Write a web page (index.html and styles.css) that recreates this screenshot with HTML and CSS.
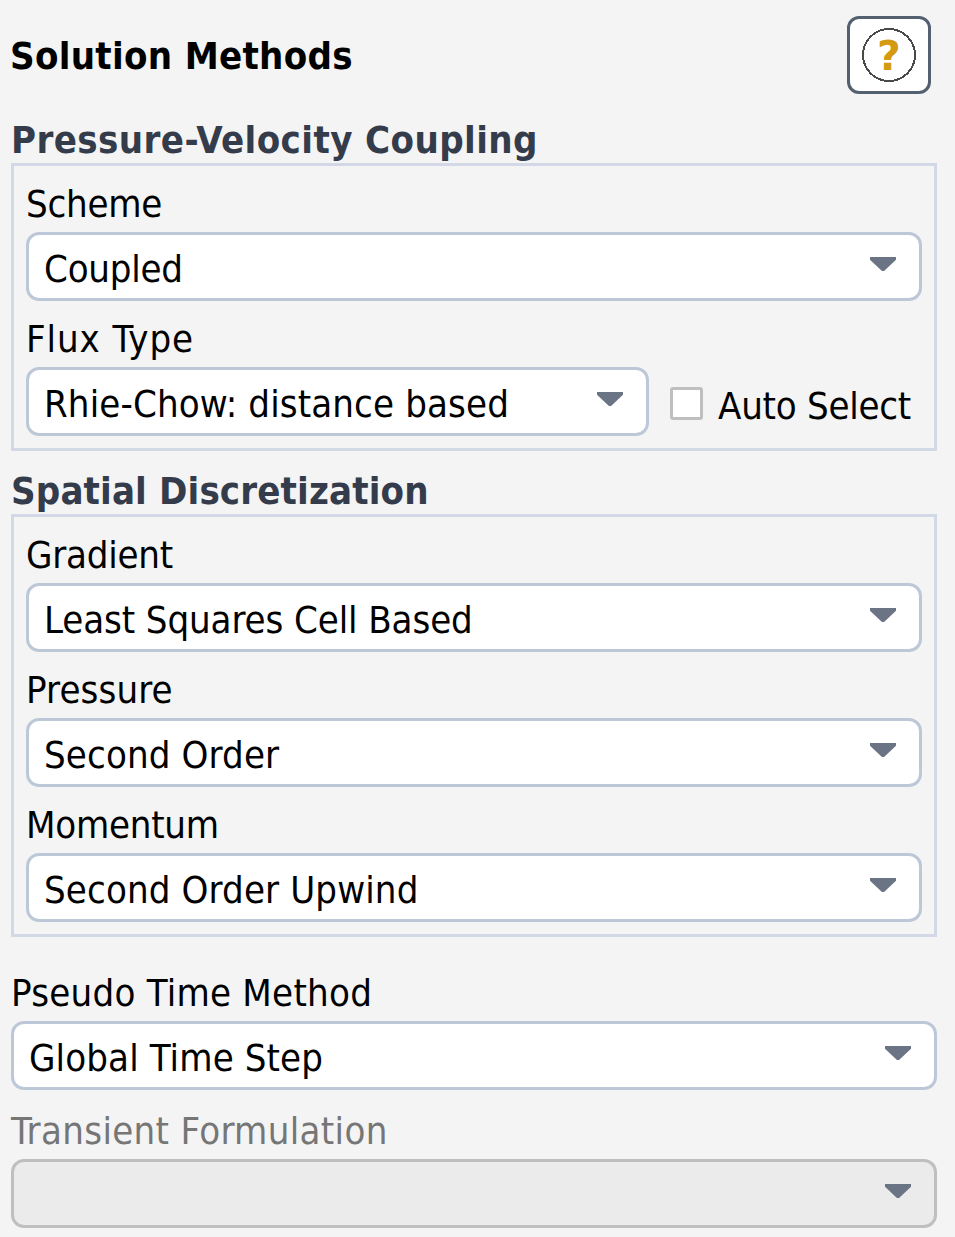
FILE: index.html
```html
<!DOCTYPE html>
<html lang="en">
<head>
<meta charset="utf-8">
<title>Solution Methods</title>
<link rel="stylesheet" href="styles.css">
</head>
<body>
<main class="panel">
  <header class="head">
    <h1 class="title">Solution Methods</h1>
    <button class="help" type="button" aria-label="Help">
      <svg width="56" height="56" viewBox="0 0 56 56">
        <circle cx="28" cy="28" r="26" fill="#fff" stroke="#4a4a4a" stroke-width="2" shape-rendering="crispEdges"/>
        <text x="28" y="43" text-anchor="middle" class="help-q">?</text>
      </svg>
    </button>
  </header>

  <h2 class="group-title first">Pressure-Velocity Coupling</h2>
  <section class="group">
    <label class="label tight">Scheme</label>
    <div class="select"><span class="tight">Coupled</span><i class="arrow"></i></div>
    <label class="label next wide">Flux Type</label>
    <div class="row">
      <div class="select grow"><span>Rhie-Chow: distance based</span><i class="arrow"></i></div>
      <div class="check"><i class="box"></i><span class="tight">Auto Select</span></div>
    </div>
  </section>

  <h2 class="group-title spaced">Spatial Discretization</h2>
  <section class="group">
    <label class="label tight">Gradient</label>
    <div class="select"><span class="snug">Least Squares Cell Based</span><i class="arrow"></i></div>
    <label class="label next">Pressure</label>
    <div class="select"><span>Second Order</span><i class="arrow"></i></div>
    <label class="label next tight">Momentum</label>
    <div class="select"><span>Second Order Upwind</span><i class="arrow"></i></div>
  </section>

  <div class="plain">
    <label class="label loose">Pseudo Time Method</label>
    <div class="select"><span>Global Time Step</span><i class="arrow"></i></div>
    <label class="label next2 disabled">Transient Formulation</label>
    <div class="select off"><span></span><i class="arrow"></i></div>
  </div>
</main>
</body>
</html>
```

FILE: styles.css
```css
* { box-sizing: border-box; }
html, body { margin: 0; height: 100%; }
body {
  background: #f4f4f4;
  color: #000;
  font-family: "DejaVu Sans Condensed", "DejaVu Sans", sans-serif;
  font-size: 38px;
  letter-spacing: 0.12px;
  overflow: hidden;
}
.panel { padding: 16px 18px 0 11px; }
.head { display: flex; justify-content: space-between; align-items: center; height: 78px; padding-right: 6px; }
.title { margin: 2px 0 0 -1px; font-size: 38px; font-weight: 700; line-height: 78px; letter-spacing: 0.3px; }
.help {
  width: 84px; height: 78px; padding: 0;
  display: flex; align-items: center; justify-content: center;
  background: #fff; border: 3px solid #53606f; border-radius: 12px;
}
.help-q { font-family: "DejaVu Sans", sans-serif; font-size: 41px; font-weight: 700; fill: #d39a12; }
.group-title { margin: 0; font-size: 38px; font-weight: 700; color: #343c4c; line-height: 46px; height: 46px; letter-spacing: 0.4px; }
.group-title.first { margin-top: 23px; }
.group-title.spaced { margin-top: 17px; letter-spacing: 0.14px; }
.group { border: 3px solid #d2d8e6; padding: 15px 12px 12px 12px; display: flex; flex-direction: column; }
.label { display: block; line-height: 46px; height: 42px; }
.label.next { margin-top: 15px; }
.label.next2 { margin-top: 18px; }
.label.disabled { color: #767676; letter-spacing: 0.33px; }
.tight { letter-spacing: -0.25px; }
.snug { letter-spacing: -0.1px; }
.label.wide { letter-spacing: 0.9px; }
.label.loose { letter-spacing: 0.25px; }
.select {
  position: relative; display: flex; align-items: center;
  height: 69px; margin-top: 9px; padding: 6px 0 0 15px;
  background: #fff; border: 3px solid #bcc7d8; border-radius: 13px;
  line-height: 57px;
}
.select.off { background: #ebebeb; border-color: #bfbfbf; }
.arrow {
  position: absolute; right: 23px; top: 22px; width: 26px; height: 14px;
  background: #6b7484;
  clip-path: polygon(0 0, 100% 0, 100% 20%, 54% 100%, 46% 100%, 0 20%);
}
.row { display: flex; align-items: flex-end; }
.grow { flex: 0 0 623px; }
.check { display: flex; align-items: center; margin: 0 0 -2px 20px; height: 64px; }
.box { width: 33px; height: 33px; margin: -6px 15px 0 1px; background: #fff; border: 3px solid #bfbfbf; border-radius: 3px; }
.plain { margin-top: 33px; }
```
